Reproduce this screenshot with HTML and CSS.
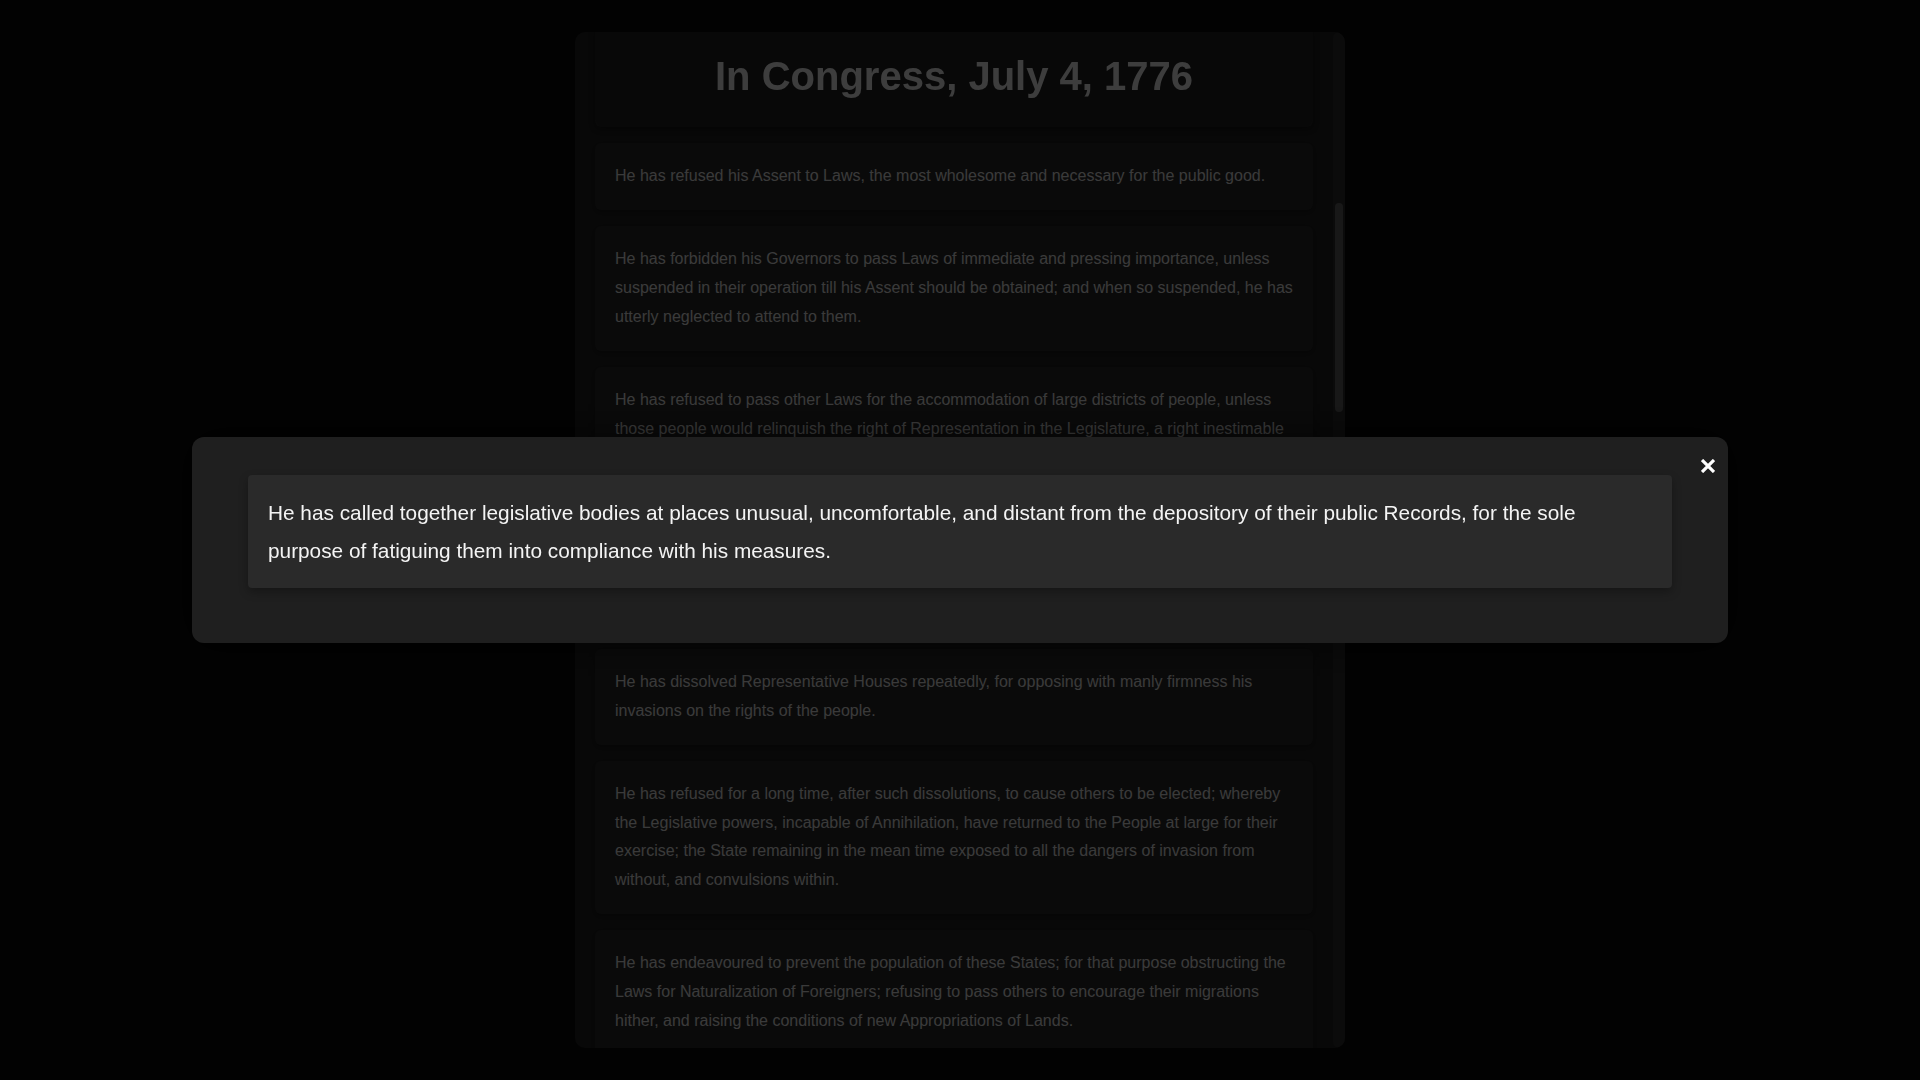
FILE: index.html
```html
<!DOCTYPE html>
<html lang="en">
<head>
<meta charset="utf-8">
<title>In Congress, July 4, 1776</title>
<link rel="stylesheet" href="styles.css">
</head>
<body>
<div class="frame">
<main class="document">
  <header class="doc-header">
    <h1 class="doc-title">In Congress, July 4, 1776</h1>
  </header>
  <section class="preamble">
    <p class="card">When in the Course of human events, it becomes necessary for one people to dissolve the political bands which have connected them with another, and to assume among the powers of the earth, the separate and equal station to which the Laws of Nature and of Nature's God entitle them, a decent respect to the opinions of mankind requires that they should declare the causes which impel them to the separation.</p>
    <p class="card">We hold these truths to be self-evident, that all men are created equal, that they are endowed by their Creator with certain unalienable Rights, that among these are Life, Liberty and the pursuit of Happiness.—That to secure these rights, Governments are instituted among Men, deriving their just powers from the consent of the governed, —That whenever any Form of Government becomes destructive of these ends, it is the Right of the People to alter or to abolish it, and to institute new Government, laying its foundation on such principles and organizing its powers in such form, as to them shall seem most likely to effect their Safety and Happiness. Prudence, indeed, will dictate that Governments long established should not be changed for light and transient causes; and accordingly all experience hath shewn, that mankind are more disposed to suffer, while evils are sufferable, than to right themselves by abolishing the forms to which they are accustomed. But when a long train of abuses and usurpations, pursuing invariably the same Object evinces a design to reduce them under absolute Despotism, it is their right, it is their duty, to throw off such Government, and to provide new Guards for their future security.—Such has been the patient sufferance of these Colonies; and such is now the necessity which constrains them to alter their former Systems of Government. The history of the present King of Great Britain is a history of repeated injuries and usurpations, all having in direct object the establishment of an absolute Tyranny over these States. To prove this, let Facts be submitted to a candid world.</p>
  </section>
  <section class="grievances">
    <p class="card first-grievance">He has refused his Assent to Laws, the most wholesome and necessary for the public good.</p>
    <p class="card">He has forbidden his Governors to pass Laws of immediate and pressing importance, unless suspended in their operation till his Assent should be obtained; and when so suspended, he has utterly neglected to attend to them.</p>
    <p class="card">He has refused to pass other Laws for the accommodation of large districts of people, unless those people would relinquish the right of Representation in the Legislature, a right inestimable to them and formidable to tyrants only.</p>
    <p class="card">He has called together legislative bodies at places unusual, uncomfortable, and distant from the depository of their public Records, for the sole purpose of fatiguing them into compliance with his measures.</p>
    <p class="card">He has dissolved Representative Houses repeatedly, for opposing with manly firmness his invasions on the rights of the people.</p>
    <p class="card">He has refused for a long time, after such dissolutions, to cause others to be elected; whereby the Legislative powers, incapable of Annihilation, have returned to the People at large for their exercise; the State remaining in the mean time exposed to all the dangers of invasion from without, and convulsions within.</p>
    <p class="card">He has endeavoured to prevent the population of these States; for that purpose obstructing the Laws for Naturalization of Foreigners; refusing to pass others to encourage their migrations hither, and raising the conditions of new Appropriations of Lands.</p>
    <p class="card">He has obstructed the Administration of Justice, by refusing his Assent to Laws for establishing Judiciary powers.</p>
    <p class="card">He has made Judges dependent on his Will alone, for the tenure of their offices, and the amount and payment of their salaries.</p>
    <p class="card">He has erected a multitude of New Offices, and sent hither swarms of Officers to harrass our people, and eat out their substance.</p>
    <p class="card">He has kept among us, in times of peace, Standing Armies without the Consent of our legislatures.</p>
    <p class="card">He has affected to render the Military independent of and superior to the Civil power.</p>
    <p class="card">He has combined with others to subject us to a jurisdiction foreign to our constitution, and unacknowledged by our laws; giving his Assent to their Acts of pretended Legislation:</p>
    <p class="card">For Quartering large bodies of armed troops among us:</p>
    <p class="card">For protecting them, by a mock Trial, from punishment for any Murders which they should commit on the Inhabitants of these States:</p>
    <p class="card">For cutting off our Trade with all parts of the world:</p>
    <p class="card">For imposing Taxes on us without our Consent:</p>
    <p class="card">For depriving us in many cases, of the benefits of Trial by Jury:</p>
    <p class="card">For transporting us beyond Seas to be tried for pretended offences:</p>
    <p class="card">For abolishing the free System of English Laws in a neighbouring Province, establishing therein an Arbitrary government, and enlarging its Boundaries so as to render it at once an example and fit instrument for introducing the same absolute rule into these Colonies:</p>
    <p class="card">For taking away our Charters, abolishing our most valuable Laws, and altering fundamentally the Forms of our Governments:</p>
    <p class="card">For suspending our own Legislatures, and declaring themselves invested with power to legislate for us in all cases whatsoever.</p>
    <p class="card">He has abdicated Government here, by declaring us out of his Protection and waging War against us.</p>
    <p class="card">He has plundered our seas, ravaged our Coasts, burnt our towns, and destroyed the lives of our people.</p>
    <p class="card">He is at this time transporting large Armies of foreign Mercenaries to compleat the works of death, desolation and tyranny, already begun with circumstances of Cruelty &amp; perfidy scarcely paralleled in the most barbarous ages, and totally unworthy the Head of a civilized nation.</p>
    <p class="card">He has constrained our fellow Citizens taken Captive on the high Seas to bear Arms against their Country, to become the executioners of their friends and Brethren, or to fall themselves by their Hands.</p>
    <p class="card">He has excited domestic insurrections amongst us, and has endeavoured to bring on the inhabitants of our frontiers, the merciless Indian Savages, whose known rule of warfare, is an undistinguished destruction of all ages, sexes and conditions.</p>
  </section>
  <section class="conclusion">
    <p class="card">In every stage of these Oppressions We have Petitioned for Redress in the most humble terms: Our repeated Petitions have been answered only by repeated injury. A Prince whose character is thus marked by every act which may define a Tyrant, is unfit to be the ruler of a free people.</p>
    <p class="card">Nor have We been wanting in attentions to our Brittish brethren. We have warned them from time to time of attempts by their legislature to extend an unwarrantable jurisdiction over us. We have reminded them of the circumstances of our emigration and settlement here. We have appealed to their native justice and magnanimity, and we have conjured them by the ties of our common kindred to disavow these usurpations, which, would inevitably interrupt our connections and correspondence. They too have been deaf to the voice of justice and of consanguinity. We must, therefore, acquiesce in the necessity, which denounces our Separation, and hold them, as we hold the rest of mankind, Enemies in War, in Peace Friends.</p>
  </section>
</main>
<div class="scrollbar" aria-hidden="true">
  <div class="scrollbar-thumb"></div>
</div>
</div>

<div class="overlay">
  <div class="modal" role="dialog" aria-modal="true">
    <button class="modal-close" type="button" aria-label="Close">
      <svg width="14" height="14" viewBox="0 0 14 14" aria-hidden="true">
        <path d="M1 1 L13 13 M13 1 L1 13" stroke="#ffffff" stroke-width="3.2" fill="none"/>
      </svg>
    </button>
    <p class="modal-card">He has called together legislative bodies at places unusual, uncomfortable, and distant from the depository of their public Records, for the sole purpose of fatiguing them into compliance with his measures.</p>
  </div>
</div>
<script src="script.js"></script>
</body>
</html>
```

FILE: styles.css
```css
* {
  box-sizing: border-box;
}

html, body {
  margin: 0;
  padding: 0;
  height: 100%;
}

body {
  background: #080808;
  font-family: "Liberation Sans", Arial, sans-serif;
  overflow: hidden;
}

.frame {
  display: flex;
  width: 770px;
  height: 1016px;
  margin: 32px auto 0;
  background: #1c1c1c;
  border-radius: 10px;
  overflow: hidden;
}

.document {
  position: relative;
  flex: 1;
  min-width: 0;
  padding: 0 20px 20px;
  overflow-y: auto;
  scrollbar-width: none;
}

.document::-webkit-scrollbar {
  display: none;
}

.scrollbar {
  flex: 0 0 12px;
  padding: 171px 2px 0;
  background: #262626;
  border-radius: 6px;
}

.scrollbar-thumb {
  height: 209px;
  background: #525252;
  border-radius: 4px;
}

.doc-header {
  position: sticky;
  top: 0;
  z-index: 2;
  background: #1c1c1c;
  padding: 21px 0 26px;
  margin-bottom: 17px;
  border-radius: 0 0 8px 8px;
  box-shadow: 0 4px 8px rgba(0, 0, 0, 0.25);
}

.doc-title {
  margin: 0;
  text-align: center;
  font-size: 40px;
  line-height: 46px;
  font-weight: 700;
  color: #cccccc;
}

.card {
  margin: 0 0 16px;
  padding: 19.2px 20px;
  background: #232323;
  border-radius: 6px;
  box-shadow: 0 2px 6px rgba(0, 0, 0, 0.3);
  font-size: 16px;
  line-height: 1.8;
  color: #c4c4c4;
}

.overlay {
  position: fixed;
  inset: 0;
  z-index: 10;
  background: rgba(0, 0, 0, 0.7);
  display: flex;
  align-items: center;
  justify-content: center;
}

.modal {
  position: relative;
  width: 80%;
  padding: 38px 56px 55px;
  background: #1f1f1f;
  border-radius: 12px;
  box-shadow: 0 0 40px rgba(0, 0, 0, 0.6);
}

.modal-close {
  position: absolute;
  top: 17px;
  right: 8px;
  width: 24px;
  height: 24px;
  padding: 0;
  border: 0;
  background: transparent;
  display: flex;
  align-items: center;
  justify-content: center;
  cursor: pointer;
}

.modal-card {
  margin: 0;
  padding: 19px 20px;
  background: #2a2a2a;
  border-radius: 4px;
  box-shadow: 0 4px 10px rgba(0, 0, 0, 0.3);
  font-size: 20.8px;
  line-height: 37.4px;
  color: #f4f4f4;
}
```

FILE: script.js
```js
(function () {
  var box = document.querySelector('.document');
  var first = document.querySelector('.first-grievance');
  if (box && first) {
    box.scrollTop = first.offsetTop - 111;
  }
})();
```
